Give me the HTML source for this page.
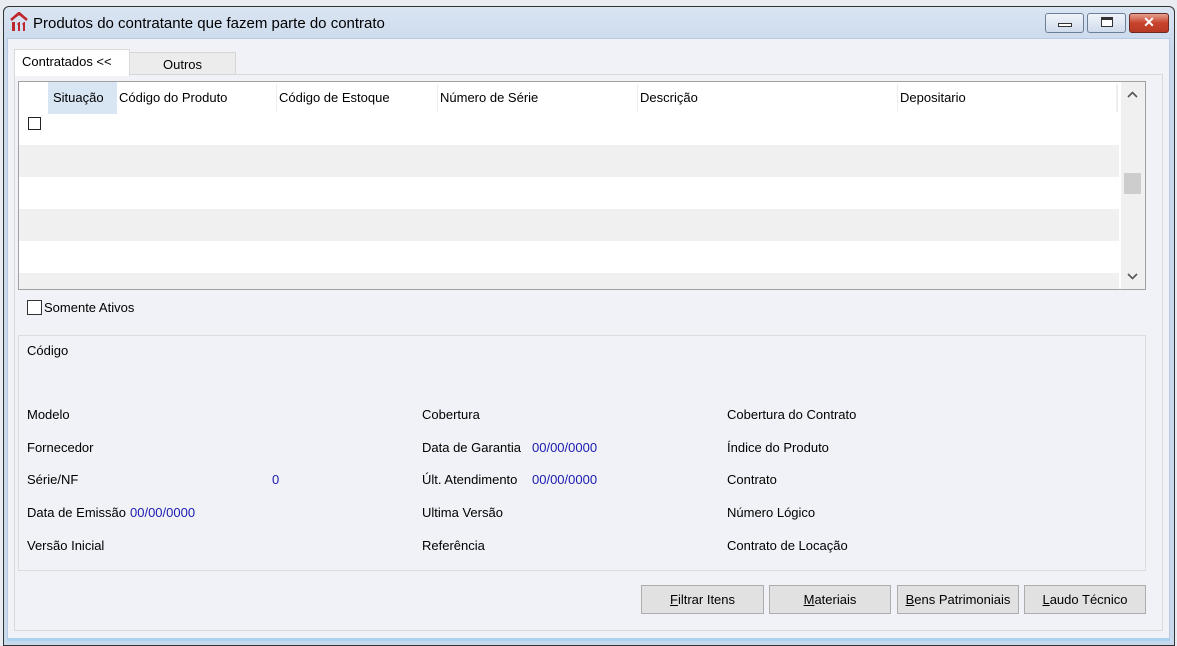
<!DOCTYPE html>
<html><head><meta charset="utf-8"><style>
*{box-sizing:border-box;margin:0;padding:0}
body{width:1177px;height:641px;background:#e9ecf0;font-family:"Liberation Sans",sans-serif;font-size:13px;color:#000;position:relative;overflow:hidden}
.a{position:absolute;white-space:nowrap}
#win{left:3px;top:6px;width:1172px;height:640px;border:1px solid #333;border-radius:6px 6px 0 0;background:linear-gradient(#dae5f2,#c9d9ec 40px);}
#content{left:7px;top:38px;width:1163px;height:603px;background:#f1f2f7;border:1px solid #b8cbe0;border-bottom:3px solid #a9d3ef}
.btnw{top:13px;height:20px;border:1px solid #6d7f97;border-radius:3px;background:linear-gradient(#f0f4fa,#cfdbeb)}
.cell{top:82px;height:32px;line-height:32px}
.lbl{font-size:13px}
.blue{color:#1a1aaf}
.b{border:1px solid #adadad;background:#e1e1e1;height:29px;top:585px;text-align:center;line-height:27px;font-size:13px}
</style></head><body>
<div id="win" class="a"></div>
<svg class="a" style="left:10px;top:12px" width="18" height="19" viewBox="0 0 18 19"><path d="M1 8 L9 1 L17 8" stroke="#c0272d" stroke-width="2.5" fill="none"/><path d="M4 6 L9 2.5 L14 6" stroke="#c0272d" stroke-width="1.2" fill="none"/><rect x="2" y="10" width="3" height="9" fill="#c0272d"/><path d="M7 12 L9 10 L10 10 L10 19 L8 19 L8 13 Z M12 12 L14 10 L15 10 L15 19 L13 19 L13 13 Z" fill="#c0272d"/></svg>
<div class="a" style="left:33px;top:15px;font-size:15px">Produtos do contratante que fazem parte do contrato</div>
<div class="a btnw" style="left:1045px;width:39px"><div class="a" style="left:12px;top:9px;width:14px;height:4px;border:1px solid #333;background:#fff"></div></div>
<div class="a btnw" style="left:1087px;width:39px"><div class="a" style="left:13px;top:3px;width:12px;height:10px;border:1px solid #333;border-top-width:3px;background:#fff"></div></div>
<div class="a" style="left:1129px;top:13px;width:40px;height:20px;border:1px solid #6b2a22;border-radius:3px;background:linear-gradient(#e4a08f,#c8432c 50%,#b73a24)"><div class="a" style="left:0;top:0;width:38px;text-align:center;color:#fff;font-weight:bold;font-size:14px;line-height:17px">✕</div></div>
<div id="content" class="a"></div>
<div class="a" style="left:14px;top:74px;width:1149px;height:557px;border:1px solid #dadada"></div>
<div class="a" style="left:129px;top:52px;width:107px;height:23px;background:#ececec;border:1px solid #d6d6d6;text-align:center;line-height:24px">Outros</div>
<div class="a" style="left:14px;top:49px;width:116px;height:27px;background:#fff;border:1px solid #dadada;border-bottom:none;padding-left:7px;line-height:24px">Contratados &lt;&lt;</div>
<div class="a" style="left:18px;top:81px;width:1128px;height:209px;border:1px solid #a0a0a0;background:#fff"></div>
<div class="a" style="left:19px;top:145px;width:1100px;height:32px;background:#f0f0f0"></div>
<div class="a" style="left:19px;top:209px;width:1100px;height:32px;background:#f0f0f0"></div>
<div class="a" style="left:19px;top:273px;width:1100px;height:16px;background:#f0f0f0"></div>
<div class="a" style="left:48px;top:82px;width:69px;height:32px;background:#d8e6f4"></div>
<div class="a cell" style="left:53px">Situação</div>
<div class="a cell" style="left:119px">Código do Produto</div>
<div class="a cell" style="left:279px">Código de Estoque</div>
<div class="a cell" style="left:440px">Número de Série</div>
<div class="a cell" style="left:640px">Descrição</div>
<div class="a cell" style="left:900px">Depositario</div>
<div class="a" style="left:276px;top:84px;width:1px;height:28px;background:#eee"></div>
<div class="a" style="left:437px;top:84px;width:1px;height:28px;background:#eee"></div>
<div class="a" style="left:637px;top:84px;width:1px;height:28px;background:#eee"></div>
<div class="a" style="left:897px;top:84px;width:1px;height:28px;background:#eee"></div>
<div class="a" style="left:1116px;top:84px;width:2px;height:28px;background:#eee"></div>
<div class="a" style="left:28px;top:117px;width:13px;height:13px;border:1px solid #222;background:#fff"></div>
<div class="a" style="left:1121px;top:82px;width:24px;height:207px;background:#f0f0f0"></div>
<div class="a" style="left:1124px;top:173px;width:17px;height:21px;background:#cdcdcd"></div>
<svg class="a" style="left:1127px;top:91px" width="11" height="8"><path d="M1 6 L5.5 1.5 L10 6" stroke="#555" stroke-width="1.6" fill="none"/></svg>
<svg class="a" style="left:1127px;top:272px" width="11" height="8"><path d="M1 2 L5.5 6.5 L10 2" stroke="#555" stroke-width="1.6" fill="none"/></svg>
<div class="a" style="left:27px;top:300px;width:15px;height:15px;border:1px solid #333;background:#fff"></div>
<div class="a" style="left:44px;top:300px">Somente Ativos</div>
<div class="a" style="left:18px;top:335px;width:1128px;height:236px;border:1px solid #dcdcdc"></div>
<div class="a lbl" style="left:27px;top:343px">Código</div>
<div class="a lbl" style="left:27px;top:407px">Modelo</div>
<div class="a lbl" style="left:27px;top:440px">Fornecedor</div>
<div class="a lbl" style="left:27px;top:472px">Série/NF</div>
<div class="a lbl blue" style="left:272px;top:472px">0</div>
<div class="a lbl" style="left:27px;top:505px">Data de Emissão</div><div class="a lbl blue" style="left:130px;top:505px">00/00/0000</div>
<div class="a lbl" style="left:27px;top:538px">Versão Inicial</div>
<div class="a lbl" style="left:422px;top:407px">Cobertura</div>
<div class="a lbl" style="left:422px;top:440px">Data de Garantia</div><div class="a lbl blue" style="left:532px;top:440px">00/00/0000</div>
<div class="a lbl" style="left:422px;top:472px">Últ. Atendimento</div><div class="a lbl blue" style="left:532px;top:472px">00/00/0000</div>
<div class="a lbl" style="left:422px;top:505px">Ultima Versão</div>
<div class="a lbl" style="left:422px;top:538px">Referência</div>
<div class="a lbl" style="left:727px;top:407px">Cobertura do Contrato</div>
<div class="a lbl" style="left:727px;top:440px">Índice do Produto</div>
<div class="a lbl" style="left:727px;top:472px">Contrato</div>
<div class="a lbl" style="left:727px;top:505px">Número Lógico</div>
<div class="a lbl" style="left:727px;top:538px">Contrato de Locação</div>
<div class="a b" style="left:641px;width:123px"><u>F</u>iltrar Itens</div>
<div class="a b" style="left:769px;width:122px"><u>M</u>ateriais</div>
<div class="a b" style="left:897px;width:122px"><u>B</u>ens Patrimoniais</div>
<div class="a b" style="left:1024px;width:122px"><u>L</u>audo Técnico</div>
</body></html>
